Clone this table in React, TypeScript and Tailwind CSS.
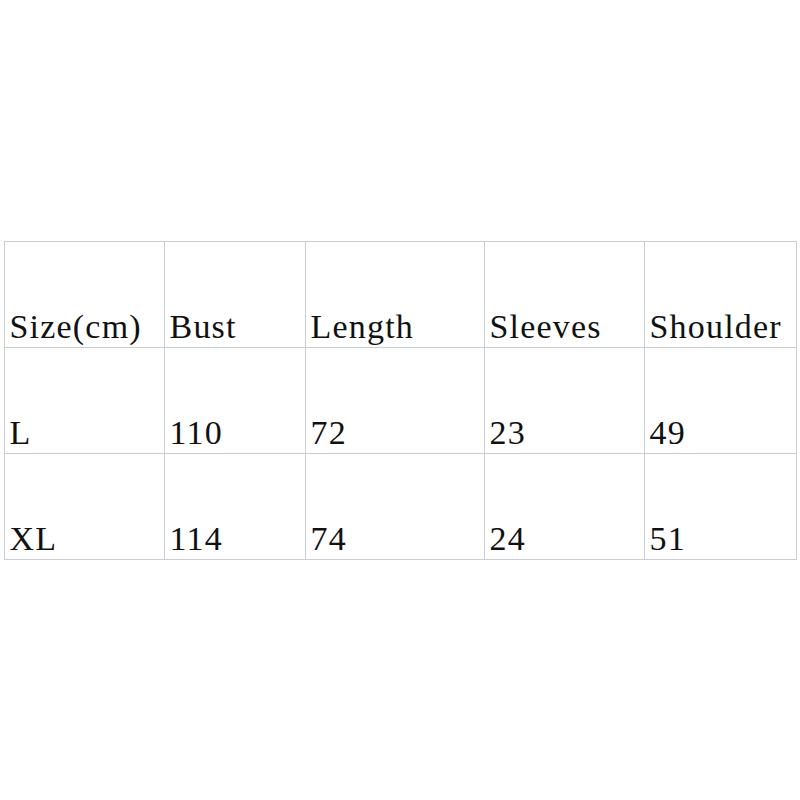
import React from 'react';

const widths = [160, 141, 179, 160, 152];

const rows: string[][] = [
  ['Size(cm)', 'Bust', 'Length', 'Sleeves', 'Shoulder'],
  ['L', '110', '72', '23', '49'],
  ['XL', '114', '74', '24', '51'],
];

export default function App() {
  return (
    <div className="flex h-[800px] w-[800px] items-center justify-center bg-white">
      <table className="table-fixed border-collapse text-[#111]" style={{ fontFamily: '"Liberation Serif", serif' }}>
        <colgroup>
          {widths.map((w, i) => (
            <col key={i} style={{ width: w }} />
          ))}
        </colgroup>
        <tbody>
          {rows.map((row, r) => (
            <tr key={r} className="h-[106px]">
              {row.map((cell, c) => (
                <td
                  key={c}
                  className="border border-[#c8cdd8] pb-[3px] pl-[5px] align-bottom text-[34px] leading-none tracking-[1.2px] whitespace-nowrap"
                >
                  {cell}
                </td>
              ))}
            </tr>
          ))}
        </tbody>
      </table>
    </div>
  );
}
